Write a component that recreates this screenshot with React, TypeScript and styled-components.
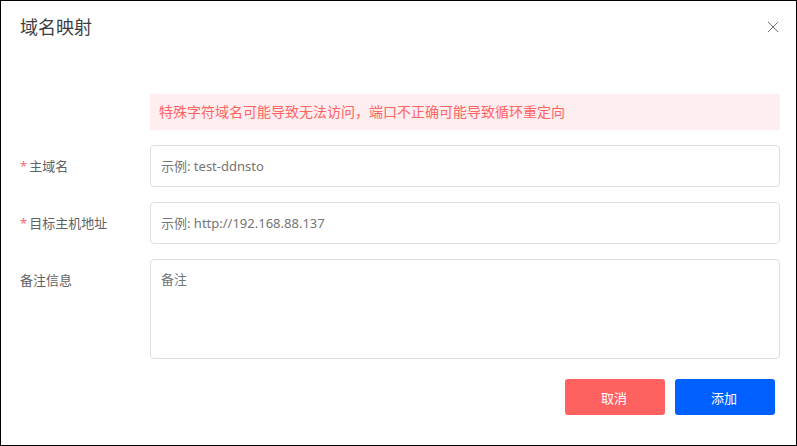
import React from "react";
import styled, { createGlobalStyle, css } from "styled-components";

const GlobalStyle = createGlobalStyle`
  *, *::before, *::after { box-sizing: border-box; }
  body {
    margin: 0;
    background: #fff;
    font-family: "Noto Sans", "Noto Sans CJK SC", sans-serif;
  }
`;

const Dialog = styled.section`
  display: flex;
  flex-direction: column;
  min-height: 100vh;
  padding: 14px 16px 30px 19px;
  background: #fff;
  border: 1px solid #000;
`;

const Header = styled.header`
  display: flex;
  align-items: center;
  justify-content: space-between;
  height: 24px;
  margin-bottom: 55px;
`;

const Title = styled.h1`
  margin: 0;
  font-size: 18px;
  line-height: 24px;
  font-weight: 400;
  color: #3c3e42;
`;

const CloseButton = styled.button`
  display: flex;
  padding: 0;
  border: 0;
  background: none;
  color: #74777e;
  cursor: pointer;
`;

const Form = styled.form`
  display: grid;
  grid-template-columns: 130px 1fr;
  row-gap: 15px;
`;

const Alert = styled.p`
  grid-column: 2;
  margin: 0;
  padding: 0 9px;
  font-size: 14px;
  line-height: 36px;
  color: #ff6464;
  background: #ffeeef;
`;

const Label = styled.label`
  font-size: 13px;
  line-height: 42px;
  color: #606266;
`;

const Required = styled.span`
  margin-right: 2px;
  color: #f56c6c;
`;

const field = css`
  display: block;
  width: 100%;
  padding: 0 10px;
  border: 1px solid #dcdfe6;
  border-radius: 4px;
  background: #fff;
  font-family: inherit;
  font-size: 13px;
  color: #333;
  &::placeholder { color: #757575; opacity: 1; }
`;

const TextField = styled.input`
  ${field}
  height: 42px;
`;

const TextArea = styled.textarea`
  ${field}
  height: 100px;
  padding: 9px 10px;
  line-height: 20px;
  resize: none;
`;

const Actions = styled.footer`
  display: flex;
  justify-content: flex-end;
  gap: 10px;
  margin-top: 20px;
  padding-right: 5px;
`;

const Button = styled.button<{ $tone: string }>`
  width: 100px;
  height: 36px;
  padding: 0 2px 0 0;
  border: 0;
  border-radius: 3px;
  background: ${(p) => p.$tone};
  color: #fff;
  font-family: inherit;
  font-size: 13px;
  cursor: pointer;
`;

export default function App() {
  return (
    <>
      <GlobalStyle />
      <Dialog role="dialog" aria-labelledby="title">
        <Header>
          <Title id="title">域名映射</Title>
          <CloseButton type="button" aria-label="关闭">
            <svg width="14" height="14" viewBox="0 0 14 14" fill="none" stroke="currentColor" strokeWidth="1">
              <path d="M2 2l10 10M12 2L2 12" />
            </svg>
          </CloseButton>
        </Header>
        <Form id="mapping" onSubmit={(e) => e.preventDefault()}>
          <Alert role="alert">特殊字符域名可能导致无法访问，端口不正确可能导致循环重定向</Alert>
          <Label htmlFor="domain"><Required>*</Required>主域名</Label>
          <TextField id="domain" required placeholder="示例: test-ddnsto" />
          <Label htmlFor="target"><Required>*</Required>目标主机地址</Label>
          <TextField id="target" required placeholder="示例: http://192.168.88.137" />
          <Label htmlFor="remark">备注信息</Label>
          <TextArea id="remark" placeholder="备注" />
        </Form>
        <Actions>
          <Button type="button" $tone="#ff6060">取消</Button>
          <Button type="submit" form="mapping" $tone="#0060ff">添加</Button>
        </Actions>
      </Dialog>
    </>
  );
}
